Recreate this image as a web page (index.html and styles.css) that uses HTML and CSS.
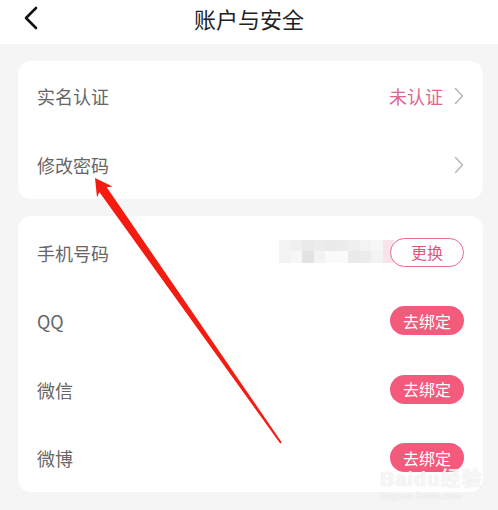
FILE: index.html
```html
<!DOCTYPE html>
<html lang="zh">
<head>
<meta charset="utf-8">
<title>账户与安全</title>
<link rel="stylesheet" href="styles.css">
</head>
<body>
<div class="page">
  <header class="nav">
    <svg class="back" width="16" height="24" viewBox="0 0 16 24"><path d="M13 2 L3 12 L13 22" fill="none" stroke="#111" stroke-width="2.6" stroke-linecap="round" stroke-linejoin="round"/></svg>
    <h1 class="title">账户与安全</h1>
  </header>
  <main class="content">
    <section class="card">
      <div class="row">
        <span class="label">实名认证</span>
        <span class="right"><span class="status">未认证</span><svg class="chev" width="10" height="18" viewBox="0 0 10 18"><path d="M1.5 1.5 L8.5 9 L1.5 16.5" fill="none" stroke="#b4b4b4" stroke-width="1.4" stroke-linecap="round" stroke-linejoin="round"/></svg></span>
      </div>
      <div class="row">
        <span class="label">修改密码</span>
        <span class="right"><svg class="chev" width="10" height="18" viewBox="0 0 10 18"><path d="M1.5 1.5 L8.5 9 L1.5 16.5" fill="none" stroke="#b4b4b4" stroke-width="1.4" stroke-linecap="round" stroke-linejoin="round"/></svg></span>
      </div>
    </section>
    <section class="card card2">
      <div class="row">
        <span class="label">手机号码</span>
        <span class="right">
          <span class="blur">
            <i class="c1"></i><i class="c2"></i><i class="c3"></i><i class="c4"></i><i class="c3"></i><i class="c4"></i><i class="c2"></i><i class="c1"></i><i class="c5"></i><i class="p1"></i>
            <i class="c1"></i><i class="c5"></i><i class="c6"></i><i class="c1"></i><i class="c7"></i><i class="c7"></i><i class="c3"></i><i class="c4"></i><i class="c1"></i><i class="p1"></i>
          </span>
          <span class="btn outline">更换</span>
        </span>
      </div>
      <div class="row">
        <span class="label">QQ</span>
        <span class="right"><span class="btn fill">去绑定</span></span>
      </div>
      <div class="row">
        <span class="label">微信</span>
        <span class="right"><span class="btn fill">去绑定</span></span>
      </div>
      <div class="row">
        <span class="label">微博</span>
        <span class="right"><span class="btn fill">去绑定</span></span>
      </div>
    </section>
  </main>
  <svg class="arrow" width="498" height="510" viewBox="0 0 498 510">
    <polygon points="95,178 112.5,186.5 106.7,187.2 281.8,442.4 280.2,443.6 99.3,192.1 97,197.5" fill="#f41c10"/>
  </svg>
  <div class="watermark">
    <div class="wm1">Baidu经验</div>
    <div class="wm2">jingyan.baidu.com</div>
  </div>
</div>
</body>
</html>
```
FILE: styles.css
```css
* { box-sizing: border-box; }
html, body { margin: 0; padding: 0; }
body {
  width: 498px;
  height: 510px;
  overflow: hidden;
  background: #f5f5f5;
  font-family: "Noto Sans CJK SC", "Noto Sans", sans-serif;
}
.page {
  position: relative;
  width: 498px;
  height: 510px;
}
.nav {
  height: 44px;
  background: #fff;
  display: flex;
  align-items: center;
  justify-content: center;
  position: relative;
}
.back {
  position: absolute;
  left: 23px;
  top: 6px;
}
.title {
  margin: 0;
  font-size: 22px;
  font-weight: 400;
  color: #222;
  line-height: 30px;
  margin-top: -9px;
}
.content {
  padding: 17px 15px 0 18px;
  display: flex;
  flex-direction: column;
  gap: 17px;
}
.card {
  background: #fff;
  border-radius: 13px;
  display: flex;
  flex-direction: column;
  padding: 0 19px;
}
.card2 {
  padding-top: 2px;
}
.row {
  height: 69px;
  display: flex;
  align-items: center;
  justify-content: space-between;
}
.card2 .row { height: 68.5px; }
.label {
  font-size: 18px;
  color: #666;
  line-height: 24px;
  margin-top: 1px;
}
.right {
  display: flex;
  align-items: center;
}
.status {
  font-size: 18px;
  color: #e06590;
  margin-right: 11px;
  line-height: 24px;
}
.chev { display: block; }
.blur {
  display: grid;
  grid-template-columns: repeat(10, 11.5px);
  grid-template-rows: repeat(2, 11.5px);
  margin-right: -4px;
  margin-top: -2px;
}
.blur i { display: block; }
.c1 { background: #f3f3f3; }
.c2 { background: #efefef; }
.c3 { background: #eaeaea; }
.c4 { background: #ececec; }
.c5 { background: #f7f7f7; }
.c6 { background: #e3e3e3; }
.c7 { background: #fafafa; }
.p1 { background: #f6e4ea; }
.btn {
  width: 74px;
  height: 29px;
  border-radius: 15px;
  display: flex;
  align-items: center;
  justify-content: center;
  font-size: 16px;
  line-height: 20px;
  position: relative;
}
.outline {
  border: 1.5px solid #e86b8a;
  color: #e2587d;
  background: #fff;
}
.fill {
  background: #f45a7c;
  color: #fff;
}
.arrow {
  position: absolute;
  left: 0;
  top: 0;
  pointer-events: none;
}
.watermark {
  position: absolute;
  left: 380px;
  top: 470px;
  color: rgba(255,255,255,0.8);
  text-shadow: 0 0 1px rgba(160,160,160,0.45);
  font-family: "Liberation Sans", "Noto Sans CJK SC", sans-serif;
  pointer-events: none;
}
.wm1 { font-size: 20px; font-weight: 700; line-height: 18px; letter-spacing: 1px; }
.wm2 { font-size: 10px; line-height: 12px; margin-top: 2px; font-family: "Liberation Serif", serif; letter-spacing: 0.5px; }
```
